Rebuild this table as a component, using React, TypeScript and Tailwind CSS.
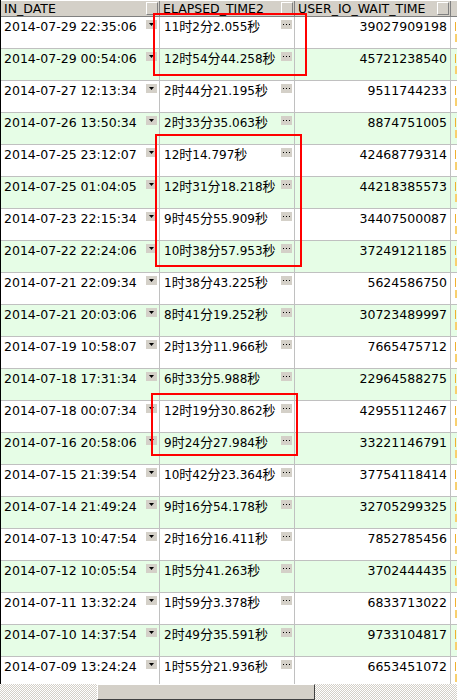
import React from "react";

const rows: [string, string, string][] = [
  ["2014-07-29 22:35:06", "11时2分2.055秒", "39027909198"],
  ["2014-07-29 00:54:06", "12时54分44.258秒", "45721238540"],
  ["2014-07-27 12:13:34", "2时44分21.195秒", "9511744233"],
  ["2014-07-26 13:50:34", "2时33分35.063秒", "8874751005"],
  ["2014-07-25 23:12:07", "12时14.797秒", "42468779314"],
  ["2014-07-25 01:04:05", "12时31分18.218秒", "44218385573"],
  ["2014-07-23 22:15:34", "9时45分55.909秒", "34407500087"],
  ["2014-07-22 22:24:06", "10时38分57.953秒", "37249121185"],
  ["2014-07-21 22:09:34", "1时38分43.225秒", "5624586750"],
  ["2014-07-21 20:03:06", "8时41分19.252秒", "30723489997"],
  ["2014-07-19 10:58:07", "2时13分11.966秒", "7665475712"],
  ["2014-07-18 17:31:34", "6时33分5.988秒", "22964588275"],
  ["2014-07-18 00:07:34", "12时19分30.862秒", "42955112467"],
  ["2014-07-16 20:58:06", "9时24分27.984秒", "33221146791"],
  ["2014-07-15 21:39:54", "10时42分23.364秒", "37754118414"],
  ["2014-07-14 21:49:24", "9时16分54.178秒", "32705299325"],
  ["2014-07-13 10:47:54", "2时16分16.411秒", "7852785456"],
  ["2014-07-12 10:05:54", "1时5分41.263秒", "3702444435"],
  ["2014-07-11 13:32:24", "1时59分3.378秒", "6833713022"],
  ["2014-07-10 14:37:54", "2时49分35.591秒", "9733104817"],
  ["2014-07-09 13:24:24", "1时55分21.936秒", "6653451072"],
];

function HeadCell({ label, w }: { label: string; w: string }) {
  return (
    <div className={`${w} h-full flex items-center justify-between border-r border-[#808080] pl-[3px] pr-[1px] overflow-hidden`}>
      <span className="whitespace-nowrap leading-[15px]">{label}</span>
      <div className="w-[12px] h-[13px] shrink-0 bg-[#d4d0c8] border-t border-l border-white border-r border-b border-r-[#808080] border-b-[#808080]" />
    </div>
  );
}

function Duration({ text }: { text: string }) {
  const parts = text.split(/([时分秒])/).filter((p) => p !== "");
  return (
    <span className="whitespace-nowrap leading-[15px] text-[12px]">
      {parts.map((p, i) =>
        /[时分秒]/.test(p) ? (
          <span key={i} className="text-[13px]">{p}</span>
        ) : (
          <span key={i}>{p}</span>
        )
      )}
    </span>
  );
}

export default function App() {
  return (
    <div
      className="relative w-[457px] h-[700px] overflow-hidden bg-white flex flex-col text-[12.5px] text-black"
      style={{ fontFamily: '"DejaVu Sans", "Noto Sans CJK SC", sans-serif' }}
    >
      <div className="flex-1 overflow-hidden border-l border-black">
        {/* header */}
        <div className="flex h-[17px] bg-[#d4d0c8] border-t border-t-white border-b border-b-[#808080]">
          <HeadCell label="IN_DATE" w="w-[159px]" />
          <HeadCell label="ELAPSED_TIME2" w="w-[135px]" />
          <HeadCell label="USER_IO_WAIT_TIME" w="w-[156px]" />
          <div className="flex-1 bg-[#d4d0c8]" />
        </div>
        {rows.map((r, i) => (
          <div
            key={i}
            className={`flex h-[32px] border-b border-[#c0c0c0] ${i % 2 === 1 ? "bg-[#e6fde6]" : "bg-white"}`}
          >
            <div className="w-[159px] border-r border-[#c0c0c0] flex items-start justify-between pl-[3px] pr-[2px] pt-[2px]">
              <span className="whitespace-nowrap leading-[15px]">{r[0]}</span>
              <div className="mt-[1px] w-[11px] h-[9px] shrink-0 bg-[#d4d0c8] flex items-center justify-center">
                <svg width="5" height="3" viewBox="0 0 5 3">
                  <path d="M0 0h5L2.5 3z" fill="#000" />
                </svg>
              </div>
            </div>
            <div className="w-[135px] border-r border-[#c0c0c0] flex items-start justify-between pl-[4px] pr-[2px] pt-[2px]">
              <Duration text={r[1]} />
              <div className="mt-[1px] w-[11px] h-[9px] shrink-0 bg-[#d4d0c8] flex items-center justify-center">
                <svg width="7" height="2" viewBox="0 0 7 2">
                  <rect x="0" y="0" width="1" height="1" fill="#000" />
                  <rect x="3" y="0" width="1" height="1" fill="#000" />
                  <rect x="6" y="0" width="1" height="1" fill="#000" />
                </svg>
              </div>
            </div>
            <div className="w-[156px] border-r border-[#c0c0c0] flex items-start justify-end pr-[3px] pt-[2px]">
              <span className="whitespace-nowrap leading-[15px]">{r[2]}</span>
            </div>
            <div className="flex-1 overflow-hidden pl-[4px] pt-[5px] flex flex-col gap-[3px]">
              <div className="w-[1px] h-[9px] bg-[#f0b030]" />
              <div className="w-[3px] h-[8px] bg-[#f8d070]" />
            </div>
          </div>
        ))}
      </div>
      {/* horizontal scrollbar */}
      <div className="h-[16px] shrink-0 flex bg-[repeating-conic-gradient(#d4d0c8_0_25%,#ffffff_0_50%)] bg-[length:2px_2px]">
        <div className="ml-[97px] w-[218px] h-full bg-[#d4d0c8] border-t border-l border-t-white border-l-white border-r border-b border-r-[#404040] border-b-[#404040]" />
      </div>

      {/* red annotation boxes */}
      <div className="absolute left-[153px] top-[13px] w-[154px] h-[63px] border-2 border-[#ff0000]" />
      <div className="absolute left-[155px] top-[134px] w-[147px] h-[133px] border-2 border-[#ff0000]" />
      <div className="absolute left-[151px] top-[393px] w-[147px] h-[63px] border-2 border-[#ff0000]" />
    </div>
  );
}
